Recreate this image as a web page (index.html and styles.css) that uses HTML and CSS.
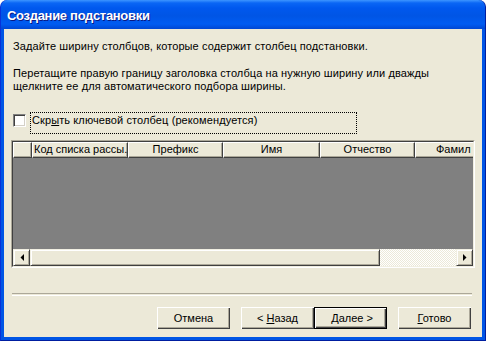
FILE: index.html
```html
<!DOCTYPE html>
<html>
<head>
  <meta charset="utf-8">
  <title>Создание подстановки</title>
  <link rel="stylesheet" href="styles.css">
</head>
<body>
  <div class="window">
    <div class="titlebar">
      <span class="title">Создание подстановки</span>
    </div>
    <div class="client">
      <p class="intro">Задайте ширину столбцов, которые содержит столбец подстановки.</p>
      <p class="intro second">Перетащите правую границу заголовка столбца на нужную ширину или дважды<br>щелкните ее для автоматического подбора ширины.</p>

      <div class="check-row">
        <span class="checkbox"></span>
        <span class="check-label">Скр<u>ы</u>ть ключевой столбец (рекомендуется)</span>
      </div>

      <div class="grid">
        <div class="grid-inner">
          <div class="grid-head">
            <div class="hcell c-sel"></div>
            <div class="hcell c-kod left">Код списка рассы.</div>
            <div class="hcell c-pref">Префикс</div>
            <div class="hcell c-name">Имя</div>
            <div class="hcell c-otch">Отчество</div>
            <div class="hcell c-fam">Фамил</div>
          </div>
          <div class="grid-body"></div>
          <div class="hscroll">
            <div class="sbtn">
              <svg width="4" height="7" viewBox="0 0 4 7"><polygon points="4,0 4,7 0.5,3.5" fill="#000"/></svg>
            </div>
            <div class="thumb"></div>
            <div class="track"></div>
            <div class="sbtn">
              <svg width="4" height="7" viewBox="0 0 4 7"><polygon points="0,0 0,7 3.5,3.5" fill="#000"/></svg>
            </div>
          </div>
        </div>
      </div>

      <div class="separator"></div>

      <div class="buttons">
        <button class="btn">Отмена</button>
        <button class="btn back">&lt; <u>Н</u>азад</button>
        <button class="btn default">&nbsp;<u>Д</u>алее &gt;</button>
        <button class="btn finish"><u>Г</u>отово</button>
      </div>
    </div>
  </div>
</body>
</html>
```

FILE: styles.css
```css
/* dialog window in XP style */
html, body {
  margin: 0;
  padding: 0;
  background: #fff;
}

body {
  font-family: "Liberation Sans", Arial, sans-serif;
  font-size: 11px;
  color: #000;
}

.window {
  width: 486px;
  height: 341px;
  display: flex;
  flex-direction: column;
  background: #0055e5;
  border-radius: 7px 7px 0 0;
  box-sizing: border-box;
  border-left: 1px solid #0831d9;
  border-right: 1px solid #001ea0;
  border-bottom: 1px solid #001ea0;
  overflow: hidden;
}

.titlebar {
  height: 29px;
  flex: none;
  display: flex;
  align-items: center;
  padding-left: 6px;
  background: linear-gradient(to bottom, #3d95ff 0, #0a66f5 3px, #0058ee 8px, #0055e5 16px, #005cf2 24px, #0047d3 29px);
  border-radius: 7px 7px 0 0;
}

.title {
  color: #fff;
  font-weight: bold;
  font-size: 13px;
  letter-spacing: -0.3px;
  text-shadow: 1px 1px #0a1883;
  margin-top: 1px;
}

.client {
  flex: 1;
  margin: 0 3px 3px 3px;
  background: #ece9d8;
  display: flex;
  flex-direction: column;
  padding-top: 11px;
}

.intro {
  margin: 0;
  padding-left: 9px;
  line-height: 13px;
  letter-spacing: 0.1px;
}

.intro.second {
  margin-top: 14px;
}

.check-row {
  margin-top: 19px;
  height: 22px;
  display: flex;
  align-items: flex-start;
  padding-left: 9px;
}

.checkbox {
  width: 13px;
  height: 13px;
  box-sizing: border-box;
  margin-top: 2px;
  background: #fff;
  border-top: 1px solid #808080;
  border-left: 1px solid #808080;
  border-bottom: 1px solid #fff;
  border-right: 1px solid #fff;
  box-shadow: inset 1px 1px #404040, inset -1px -1px #d4d0c8;
}

.check-label {
  margin-left: 4px;
  width: 327px;
  height: 22px;
  box-sizing: border-box;
  border: 1px dotted #000;
  padding: 1px 0 0 1px;
  line-height: 13px;
  letter-spacing: 0.1px;
}

.check-label u, .btn u {
  text-decoration: underline;
}

.grid {
  margin: 6px 0 0 7px;
  width: 464px;
  height: 128px;
  box-sizing: border-box;
  border-top: 1px solid #aca899;
  border-left: 1px solid #aca899;
  border-bottom: 1px solid #fff;
  border-right: 1px solid #fff;
}

.grid-inner {
  height: 100%;
  box-sizing: border-box;
  border-top: 1px solid #404040;
  border-left: 1px solid #404040;
  border-bottom: 1px solid #f1efe2;
  border-right: 1px solid #f1efe2;
  display: flex;
  flex-direction: column;
  overflow: hidden;
}

.grid-head {
  height: 16px;
  flex: none;
  display: flex;
  overflow: hidden;
  white-space: nowrap;
}

.hcell {
  flex: none;
  height: 16px;
  box-sizing: border-box;
  background: #ece9d8;
  border-top: 1px solid #fff;
  border-left: 1px solid #fff;
  border-right: 1px solid #404040;
  border-bottom: 1px solid #404040;
  box-shadow: inset -1px -1px #aca899;
  text-align: center;
  line-height: 13px;
}

.hcell.left {
  text-align: left;
  padding-left: 1px;
}

.c-sel { width: 19px; }
.c-kod { width: 96px; }
.c-pref { width: 95px; }
.c-name { width: 97px; }
.c-otch { width: 95px; }
.c-fam {
  flex: 1;
  text-align: left;
  padding-left: 20px;
  border-right: none;
  box-shadow: inset 0 -1px #aca899;
}

.grid-body {
  flex: 1;
  background: #808080;
}

.hscroll {
  height: 17px;
  flex: none;
  display: flex;
  background: #ece9d8;
}

.sbtn, .thumb {
  flex: none;
  box-sizing: border-box;
  background: #ece9d8;
  border-top: 1px solid #f1efe2;
  border-left: 1px solid #f1efe2;
  border-right: 1px solid #404040;
  border-bottom: 1px solid #404040;
  box-shadow: inset 1px 1px #fff, inset -1px -1px #aca899;
}

.sbtn {
  width: 17px;
  display: flex;
  align-items: center;
  justify-content: center;
}

.thumb {
  width: 350px;
}

.track {
  flex: 1;
  background: repeating-conic-gradient(#ece9d8 0 25%, #fff 0 50%) 0 0 / 2px 2px;
}

.separator {
  margin: 25px 0 0 8px;
  width: 460px;
  height: 1px;
  border-top: 1px solid #aca899;
  border-bottom: 1px solid #fff;
}

.buttons {
  margin-top: 11px;
  display: flex;
  padding-left: 153px;
}

.btn {
  width: 73px;
  height: 22px;
  margin: 0;
  padding: 0;
  font-family: "Liberation Sans", Arial, sans-serif;
  font-size: 11px;
  color: #000;
  background: #ece9d8;
  border: none;
  box-shadow: inset 1px 1px #fff, inset -1px -1px #404040, inset -2px -2px #aca899;
}

.btn.back {
  margin-left: 11px;
}

.btn.default {
  border: 1px solid #000;
  box-shadow: inset 1px 1px #fff, inset -1px -1px #404040, inset -2px -2px #aca899;
}

.btn.finish {
  margin-left: 11px;
}
```
